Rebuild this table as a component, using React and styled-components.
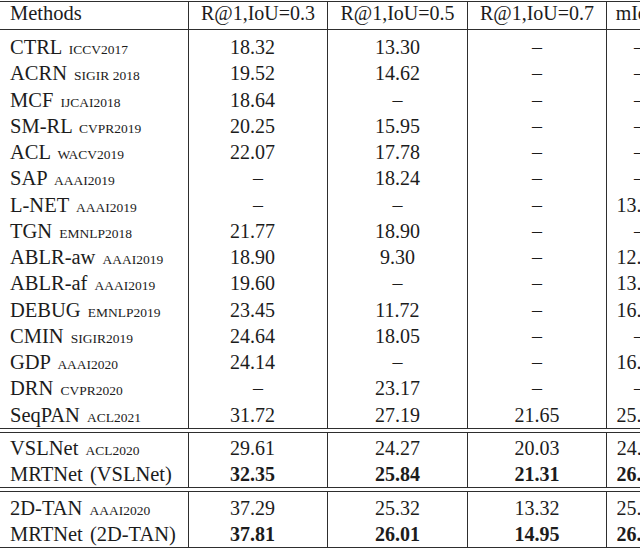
import styled, { createGlobalStyle } from "styled-components";

const columns = [
  { width: 188, align: "left", line: false },
  { width: 139, align: "center", line: true },
  { width: 140, align: "center", line: true },
  { width: 139, align: "center", line: true },
  { width: 65, align: "center", line: true },
];

const header = ["Methods", "R@1,IoU=0.3", "R@1,IoU=0.5", "R@1,IoU=0.7", "mIoU"];

const baselines = [
  { name: "CTRL", venue: "ICCV2017", values: ["18.32", "13.30", "–", "–"] },
  { name: "ACRN", venue: "SIGIR 2018", values: ["19.52", "14.62", "–", "–"] },
  { name: "MCF", venue: "IJCAI2018", values: ["18.64", "–", "–", "–"] },
  { name: "SM-RL", venue: "CVPR2019", values: ["20.25", "15.95", "–", "–"] },
  { name: "ACL", venue: "WACV2019", values: ["22.07", "17.78", "–", "–"] },
  { name: "SAP", venue: "AAAI2019", values: ["–", "18.24", "–", "–"] },
  { name: "L-NET", venue: "AAAI2019", values: ["–", "–", "–", "13.41"] },
  { name: "TGN", venue: "EMNLP2018", values: ["21.77", "18.90", "–", "–"] },
  { name: "ABLR-aw", venue: "AAAI2019", values: ["18.90", "9.30", "–", "12.50"] },
  { name: "ABLR-af", venue: "AAAI2019", values: ["19.60", "–", "–", "13.40"] },
  { name: "DEBUG", venue: "EMNLP2019", values: ["23.45", "11.72", "–", "16.45"] },
  { name: "CMIN", venue: "SIGIR2019", values: ["24.64", "18.05", "–", "–"] },
  { name: "GDP", venue: "AAAI2020", values: ["24.14", "–", "–", "16.88"] },
  { name: "DRN", venue: "CVPR2020", values: ["–", "23.17", "–", "–"] },
  { name: "SeqPAN", venue: "ACL2021", values: ["31.72", "27.19", "21.65", "25.68"] },
];

const groups = [
  {
    pad: "2.5px",
    rows: [
      { name: "VSLNet", venue: "ACL2020", values: ["29.61", "24.27", "20.03", "24.11"] },
      { name: "MRTNet (VSLNet)", bold: true, values: ["32.35", "25.84", "21.31", "26.20"] },
    ],
  },
  {
    pad: "3px",
    rows: [
      { name: "2D-TAN", venue: "AAAI2020", values: ["37.29", "25.32", "13.32", "25.19"] },
      { name: "MRTNet (2D-TAN)", bold: true, values: ["37.81", "26.01", "14.95", "26.44"] },
    ],
  },
];

const GlobalStyle = createGlobalStyle`
  body {
    margin: 0;
    overflow: hidden;
    background: #ffffff;
    color: #1c1c1c;
    font-family: "Liberation Serif", "Times New Roman", serif;
  }
`;

const Table = styled.div`
  width: 671px;
  padding-top: 1px;
`;

const Section = styled.div`
  border-top: 1px solid #2e2e2e;
  border-bottom: 1px solid #2e2e2e;
  margin-top: ${(p) => (p.$gap ? "3px" : "0")};
`;

const Row = styled.div`
  display: flex;
  --pad: ${(p) => p.$pad || "0px"};
  border-bottom: ${(p) => (p.$head ? "1px solid #2e2e2e" : "none")};
`;

const Cell = styled.div`
  box-sizing: border-box;
  flex: none;
  width: ${(p) => p.$w}px;
  border-left: ${(p) => (p.$line ? "1px solid #2e2e2e" : "none")};
  text-align: ${(p) => p.$align};
  white-space: nowrap;
  overflow: hidden;
  font-size: ${(p) => (p.$align === "left" ? "20.5px" : "20px")};
  word-spacing: ${(p) => (p.$align === "left" ? "2px" : "0")};
  line-height: ${(p) => (p.$head ? "22px" : p.$lh || "26.25px")};
  padding-top: var(--pad);
  padding-bottom: ${(p) => (p.$head ? "5px" : "0")};
  padding-left: ${(p) => (p.$align === "left" ? "10px" : "0")};
  padding-right: ${(p) => (p.$shift ? "11px" : "0")};
  font-weight: ${(p) => (p.$bold ? "bold" : "normal")};
`;

const Venue = styled.span`
  font-size: 13.5px;
  line-height: 1;
  word-spacing: 0;
`;

const DataRow = ({ row, pad, lh }) => (
  <Row $pad={pad}>
    <Cell $w={columns[0].width} $align="left" $lh={lh}>
      {row.name}
      {row.venue && (
        <>
          {" "}
          <Venue>{row.venue}</Venue>
        </>
      )}
    </Cell>
    {row.values.map((v, i) => {
      const col = columns[i + 1];
      return (
        <Cell
          key={i}
          $w={col.width}
          $line={col.line}
          $align={col.align}
          $lh={lh}
          $bold={row.bold && v !== "–"}
          $shift={i === 0 && v !== "–"}
        >
          {v}
        </Cell>
      );
    })}
  </Row>
);

export default function App() {
  return (
    <>
      <GlobalStyle />
      <Table>
        <Section>
          <Row $head>
            {header.map((h, i) => (
              <Cell
                key={h}
                $head
                $w={columns[i].width}
                $line={columns[i].line}
                $align={columns[i].align}
              >
                {h}
              </Cell>
            ))}
          </Row>
          {baselines.map((row, i) => (
            <DataRow key={row.name} row={row} pad={i === 0 ? "4px" : "0px"} />
          ))}
        </Section>
        {groups.map((g, gi) => (
          <Section $gap key={gi}>
            {g.rows.map((row, i) => (
              <DataRow key={row.name} row={row} lh="26px" pad={i === 0 ? g.pad : "0px"} />
            ))}
          </Section>
        ))}
      </Table>
    </>
  );
}
